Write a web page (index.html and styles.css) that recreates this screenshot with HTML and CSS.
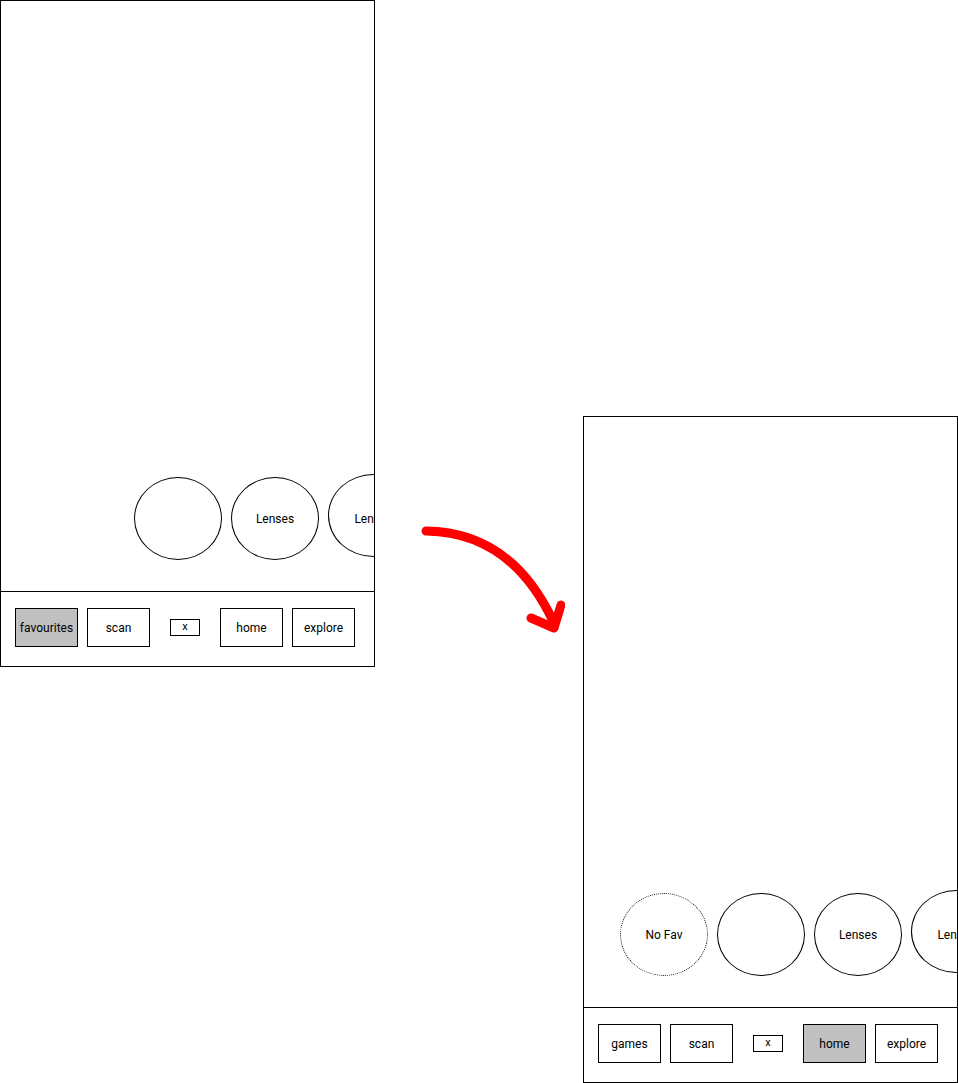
FILE: index.html
```html
<!DOCTYPE html>
<html lang="en">
<head>
<meta charset="utf-8">
<title>Favourites flow</title>
<link rel="stylesheet" href="styles.css">
</head>
<body>
<div class="canvas">
  <div class="phone">
    <div class="screen screen-start">
      <div class="circle"></div>
      <div class="circle">Lenses</div>
      <div class="circle circle-last">Lenses</div>
    </div>
    <nav class="tabbar">
      <div class="tab tab-active">favourites</div>
      <div class="tab">scan</div>
      <div class="close">x</div>
      <div class="tab">home</div>
      <div class="tab">explore</div>
    </nav>
  </div>

  <div class="connector">
    <svg class="arrow" width="150" height="120" viewBox="415 520 150 120" xmlns="http://www.w3.org/2000/svg">
      <path d="M426 531 Q511 532 553 621" fill="none" stroke="#ff0000" stroke-width="9" stroke-linecap="round"/>
      <path d="M531 618 L554 628 L561 605" fill="none" stroke="#ff0000" stroke-width="9" stroke-linecap="round" stroke-linejoin="round"/>
    </svg>
  </div>

  <div class="phone phone-after">
    <div class="screen screen-after">
      <div class="circle circle-empty">No Fav</div>
      <div class="circle"></div>
      <div class="circle">Lenses</div>
      <div class="circle circle-last">Lenses</div>
    </div>
    <nav class="tabbar">
      <div class="tab">games</div>
      <div class="tab">scan</div>
      <div class="close">x</div>
      <div class="tab tab-active">home</div>
      <div class="tab">explore</div>
    </nav>
  </div>
</div>
</body>
</html>
```

FILE: styles.css
```css
html, body {
  margin: 0;
  padding: 0;
  background: #ffffff;
}

body {
  font-family: Roboto, "Liberation Sans", sans-serif;
  font-size: 12px;
  color: #000000;
  width: 958px;
  height: 1083px;
  overflow: hidden;
}

.canvas {
  display: flex;
  align-items: flex-start;
}

.phone {
  box-sizing: border-box;
  width: 375px;
  height: 667px;
  border: 1px solid #000000;
  display: flex;
  flex-direction: column;
  flex: none;
  background: #ffffff;
}

.phone-after {
  margin-top: 416px;
}

.screen {
  height: 590px;
  flex: none;
  display: flex;
  align-items: flex-end;
  gap: 9px;
  padding-bottom: 31px;
  box-sizing: border-box;
  overflow: hidden;
}

.screen-start {
  padding-left: 133px;
}

.screen-after {
  padding-left: 36px;
}

.circle {
  box-sizing: border-box;
  flex: none;
  width: 88px;
  height: 83px;
  border: 1px solid #000000;
  border-radius: 50%;
  display: flex;
  align-items: center;
  justify-content: center;
  white-space: nowrap;
}

.circle-last {
  width: 91px;
  margin-bottom: 3px;
  padding-top: 6px;
}

.circle-empty {
  border-style: dotted;
}

.tabbar {
  flex: 1;
  border-top: 1px solid #000000;
  display: flex;
  align-items: flex-start;
  padding: 16px 0 0 14px;
}

.tab {
  box-sizing: border-box;
  width: 63px;
  height: 39px;
  border: 1px solid #000000;
  display: flex;
  align-items: center;
  justify-content: center;
  margin-right: 9px;
  flex: none;
}

.tab-active {
  background: #c0c0c0;
}

.close {
  box-sizing: border-box;
  width: 30px;
  height: 17px;
  margin: 11px 20px 0 11px;
  border: 1px solid #000000;
  font-size: 11px;
  line-height: 13px;
  text-align: center;
  flex: none;
}

.connector {
  width: 208px;
  flex: none;
  padding-top: 520px;
  padding-left: 40px;
  box-sizing: border-box;
}

.arrow {
  display: block;
}
```
